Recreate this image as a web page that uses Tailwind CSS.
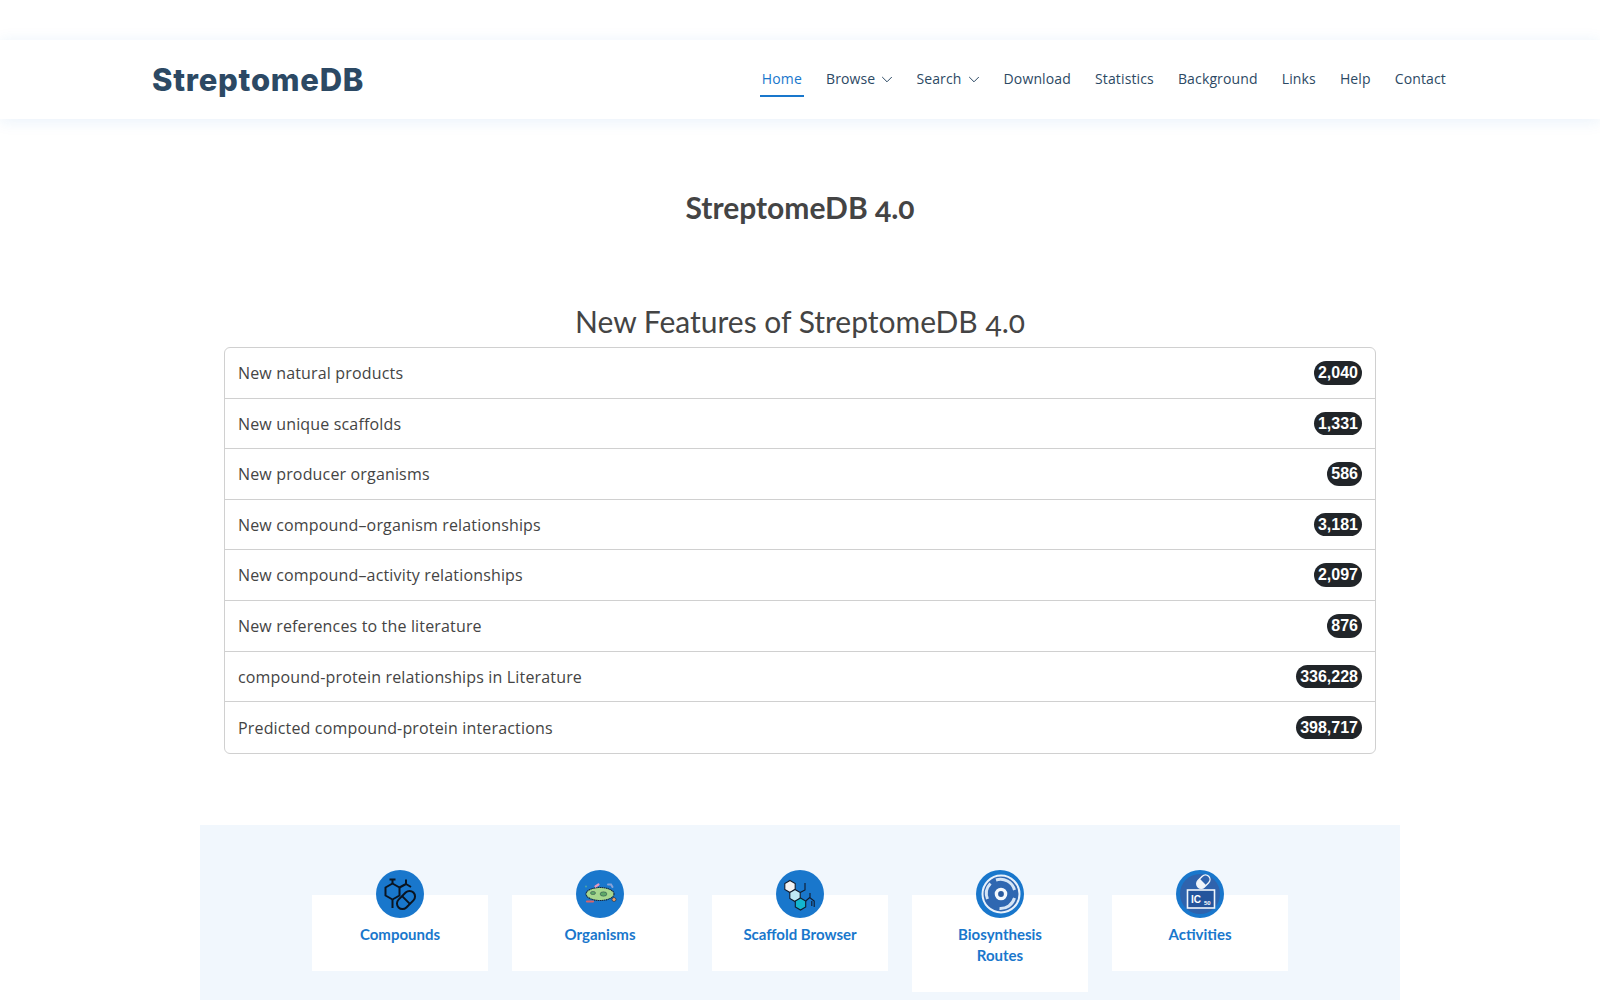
<!DOCTYPE html>
<html lang="en">
<head>
<meta charset="utf-8">
<title>StreptomeDB</title>
<script src="https://cdn.jsdelivr.net/npm/@tailwindcss/browser@4"></script>
</head>
<body class="bg-white">
<div class="h-[1000px] overflow-hidden font-['Open_Sans',sans-serif] text-[#444444]">
  <header class="mt-10 h-[79px] bg-white shadow-[0_2px_15px_rgba(25,119,204,0.1)]">
    <div class="mx-auto flex h-full w-[1320px] items-center justify-between px-3">
      <a class="mt-[2px] font-['Inter',sans-serif] text-[31px] font-extrabold tracking-[0.75px] text-[#2c4964]">StreptomeDB</a>
      <nav class="-mt-[2px] flex items-center gap-5 pr-0.5 text-sm tracking-[0.14px] text-[#2c4964]">
        <a class="flex h-[36px] items-center border-b-2 border-[#1977cc] px-0.5 pt-[2px] text-[#1977cc]">Home</a>
        <a class="flex items-center gap-[6px] pl-0.5">Browse
          <svg class="h-3 w-3" viewBox="0 0 12 12" fill="none" stroke="currentColor" stroke-width="1"><path d="M1.2 4l4.8 4.8L10.8 4"/></svg></a>
        <a class="flex items-center gap-[6px] pl-[3px]">Search
          <svg class="h-3 w-3" viewBox="0 0 12 12" fill="none" stroke="currentColor" stroke-width="1"><path d="M1.2 4l4.8 4.8L10.8 4"/></svg></a>
        <a class="pl-1">Download</a>
        <a class="pl-1">Statistics</a>
        <a class="pl-1">Background</a>
        <a class="pl-1">Links</a>
        <a class="pl-1">Help</a>
        <a class="pl-1">Contact</a>
      </nav>
    </div>
  </header>

  <main>
    <h1 class="pt-[68px] text-center font-['Lato',sans-serif] text-[30px] font-bold leading-[40px] [font-variant-numeric:oldstyle-nums]">StreptomeDB 4.0</h1>
    <h2 class="mt-[74px] text-center font-['Lato',sans-serif] text-[30px] font-normal leading-[40px] [font-variant-numeric:oldstyle-nums]">New Features of StreptomeDB 4.0</h2>

    <ul class="mx-auto mt-[6px] w-[1152px] divide-y divide-[#d0d0d0] rounded-md border border-[#d0d0d0] text-base leading-[25.6px] tracking-[0.16px]">
      <li class="flex h-[50.6px] items-center justify-between px-[13px]"><span class="pt-[2px]">New natural products</span><span class="rounded-full bg-[#212529] px-[4px] font-['Liberation_Sans',sans-serif] font-bold leading-[23.5px] tracking-normal text-white">2,040</span></li>
      <li class="flex h-[50.6px] items-center justify-between px-[13px]"><span class="pt-[2px]">New unique scaffolds</span><span class="rounded-full bg-[#212529] px-[4px] font-['Liberation_Sans',sans-serif] font-bold leading-[23.5px] tracking-normal text-white">1,331</span></li>
      <li class="flex h-[50.6px] items-center justify-between px-[13px]"><span class="pt-[2px]">New producer organisms</span><span class="rounded-full bg-[#212529] px-[4px] font-['Liberation_Sans',sans-serif] font-bold leading-[23.5px] tracking-normal text-white">586</span></li>
      <li class="flex h-[50.6px] items-center justify-between px-[13px]"><span class="pt-[2px]">New compound–organism relationships</span><span class="rounded-full bg-[#212529] px-[4px] font-['Liberation_Sans',sans-serif] font-bold leading-[23.5px] tracking-normal text-white">3,181</span></li>
      <li class="flex h-[50.6px] items-center justify-between px-[13px]"><span class="pt-[2px]">New compound–activity relationships</span><span class="rounded-full bg-[#212529] px-[4px] font-['Liberation_Sans',sans-serif] font-bold leading-[23.5px] tracking-normal text-white">2,097</span></li>
      <li class="flex h-[50.6px] items-center justify-between px-[13px]"><span class="pt-[2px]">New references to the literature</span><span class="rounded-full bg-[#212529] px-[4px] font-['Liberation_Sans',sans-serif] font-bold leading-[23.5px] tracking-normal text-white">876</span></li>
      <li class="flex h-[50.6px] items-center justify-between px-[13px]"><span class="pt-[2px]">compound-protein relationships in Literature</span><span class="rounded-full bg-[#212529] px-[4px] font-['Liberation_Sans',sans-serif] font-bold leading-[23.5px] tracking-normal text-white">336,228</span></li>
      <li class="flex h-[50.6px] items-center justify-between px-[13px]"><span class="pt-[2px]">Predicted compound-protein interactions</span><span class="rounded-full bg-[#212529] px-[4px] font-['Liberation_Sans',sans-serif] font-bold leading-[23.5px] tracking-normal text-white">398,717</span></li>
    </ul>

    <section class="mx-auto mt-[71px] flex h-[300px] w-[1200px] items-start justify-center gap-6 bg-[#f1f7fd] pt-[70px]">
      <div class="flex w-[176px] flex-col items-center bg-white pb-[26px] text-center">
        <svg class="-mt-[25px] h-12 w-12" viewBox="0 0 48 48">
          <circle cx="24" cy="24" r="24" fill="#1977cc"/>
          <g fill="none" stroke="#0a1420" stroke-width="2" stroke-linejoin="round">
            <path d="M16.5 13.5l7 4v8l-7 4-7-4v-8z"/>
            <path d="M16.5 13.5V9M13.5 9.5h6M23.5 17.5l6.5-3.5 5 3M30 14V9.5M16.5 29.5V38"/>
            <g transform="rotate(-45 30 30)"><rect x="19.5" y="24.5" width="21" height="11" rx="5.5" fill="#1977cc"/><path d="M30 24.5v11"/></g>
          </g>
        </svg>
        <span class="mt-[6px] font-['Lato',sans-serif] text-[15px] font-bold leading-[21px] text-[#1977cc]">Compounds</span>
      </div>
      <div class="flex w-[176px] flex-col items-center bg-white pb-[26px] text-center">
        <svg class="-mt-[25px] h-12 w-12" viewBox="0 0 48 48">
          <circle cx="24" cy="24" r="24" fill="#1977cc"/>
          <ellipse cx="24" cy="24" rx="14" ry="6.5" fill="#a7d78e" stroke="#14263f" stroke-width="1.1" stroke-dasharray="1.4 .5"/>
          <ellipse cx="17" cy="23" rx="2.6" ry="1.6" fill="#5fa868" stroke="#14263f" stroke-width=".4"/>
          <ellipse cx="27.5" cy="24" rx="3.4" ry="2.2" fill="#5fa868" stroke="#14263f" stroke-width=".4"/>
          <path d="M19.5 16.5l3-2" stroke="#e79ac0" stroke-width="2.2" stroke-linecap="round"/>
          <path d="M32 14.5h3l1.5 2.5" stroke="#8aa3d8" stroke-width="2" fill="none" stroke-linecap="round"/>
          <circle cx="10" cy="16.5" r="1" fill="#4fa6a0"/>
          <path d="M11 31.5h6" stroke="#d9636a" stroke-width="2.2" stroke-linecap="round"/>
          <circle cx="38" cy="29.5" r="2" fill="#e8a06a" stroke="#14263f" stroke-width=".6"/>
        </svg>
        <span class="mt-[6px] font-['Lato',sans-serif] text-[15px] font-bold leading-[21px] text-[#1977cc]">Organisms</span>
      </div>
      <div class="flex w-[176px] flex-col items-center bg-white pb-[26px] text-center">
        <svg class="-mt-[25px] h-12 w-12" viewBox="0 0 48 48">
          <circle cx="24" cy="24" r="24" fill="#1977cc"/>
          <g stroke="#101b2d" stroke-width="1.1">
            <path d="M14 10.5l5.2 3v6L14 22.5l-5.2-3v-6z" fill="#f3f3f3"/>
            <path d="M19 19.5l5.2 3v6L19 31.5l-5.2-3v-6z" fill="#bfe9f5"/>
            <path d="M24.5 28l5.2 3v6l-5.2 3-5.2-3v-6z" fill="#13b5cf"/>
            <path d="M24.2 22.5l4.8-2.5v-7M29.7 31l4-3.5 4.5 3.5v6M35.8 31v5M34 27.5V23" fill="none"/>
          </g>
        </svg>
        <span class="mt-[6px] font-['Lato',sans-serif] text-[15px] font-bold leading-[21px] text-[#1977cc]">Scaffold Browser</span>
      </div>
      <div class="flex w-[176px] flex-col items-center bg-white pb-[26px] text-center">
        <svg class="-mt-[25px] h-12 w-12" viewBox="0 0 48 48">
          <circle cx="24" cy="24" r="24" fill="#1977cc"/>
          <circle cx="25" cy="24" r="18.5" fill="#2f67b1" stroke="#e8f1fb" stroke-width="2"/>
          <path d="M11.5 29a14.5 14.5 0 0 1 3-15.5M20 10a14.5 14.5 0 0 1 18.5 10M38.5 28a14.5 14.5 0 0 1-15 10.5" fill="none" stroke="#d5e5f6" stroke-width="3"/>
          <circle cx="25" cy="24" r="4.6" fill="#2a5a9f" stroke="#f4f8fd" stroke-width="3.4"/>
        </svg>
        <span class="mt-[6px] w-[120px] font-['Lato',sans-serif] text-[15px] font-bold leading-[21px] text-[#1977cc]">Biosynthesis Routes</span>
      </div>
      <div class="flex w-[176px] flex-col items-center bg-white pb-[26px] text-center">
        <svg class="-mt-[25px] h-12 w-12" viewBox="0 0 48 48">
          <circle cx="24" cy="24" r="24" fill="#1977cc"/>
          <circle cx="24" cy="24" r="20" fill="#2f63ad"/>
          <g transform="rotate(-45 27 12)"><rect x="20" y="7.5" width="15" height="9" rx="4.5" fill="#2f63ad" stroke="#f2f6fb" stroke-width="1.4"/><path d="M20 12a4.5 4.5 0 0 1 4.5-4.5H27v9h-2.5A4.5 4.5 0 0 1 20 12z" fill="#f2f6fb"/></g>
          <rect x="11.5" y="20" width="27" height="18" fill="#24549c" stroke="#f2f6fb" stroke-width="1.6"/>
          <text x="15" y="33" fill="#fff" font-family="Liberation Sans, sans-serif" font-size="10" font-weight="700">IC</text>
          <text x="28" y="35" fill="#fff" font-family="Liberation Sans, sans-serif" font-size="6" font-weight="700">50</text>
        </svg>
        <span class="mt-[6px] font-['Lato',sans-serif] text-[15px] font-bold leading-[21px] text-[#1977cc]">Activities</span>
      </div>
    </section>
  </main>
</div>
</body>
</html>
